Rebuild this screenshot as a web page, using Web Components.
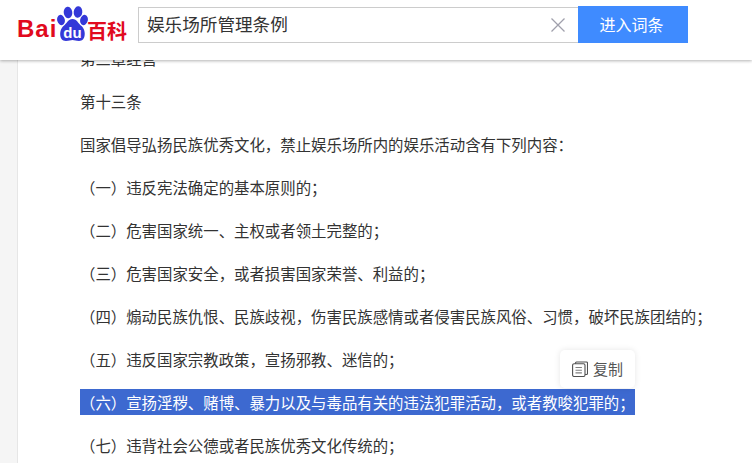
<!DOCTYPE html>
<html lang="zh">
<head>
<meta charset="utf-8">
<title>娱乐场所管理条例</title>
<style>
    html, body {
        margin: 0;
        height: 100%;
        overflow: hidden;
        background: #fff;
        font-family: "Noto Sans CJK SC", "Liberation Sans", sans-serif;
    }
</style>
</head>
<body>
<baike-page>
    <baike-header slot="header"></baike-header>
    <baike-article>
        <baike-para>第三章经营</baike-para>
        <baike-para>第十三条</baike-para>
        <baike-para>国家倡导弘扬民族优秀文化，禁止娱乐场所内的娱乐活动含有下列内容：</baike-para>
        <baike-para>（一）违反宪法确定的基本原则的；</baike-para>
        <baike-para>（二）危害国家统一、主权或者领土完整的；</baike-para>
        <baike-para>（三）危害国家安全，或者损害国家荣誉、利益的；</baike-para>
        <baike-para>（四）煽动民族仇恨、民族歧视，伤害民族感情或者侵害民族风俗、习惯，破坏民族团结的；</baike-para>
        <baike-para>（五）违反国家宗教政策，宣扬邪教、迷信的；</baike-para>
        <baike-para selected>（六）宣扬淫秽、赌博、暴力以及与毒品有关的违法犯罪活动，或者教唆犯罪的；<copy-tip></copy-tip></baike-para>
        <baike-para>（七）违背社会公德或者民族优秀文化传统的；</baike-para>
    </baike-article>
</baike-page>

<script>
class BaikePage extends HTMLElement {
    constructor() {
        super();
        this.attachShadow({ mode: "open" }).innerHTML = `
<style>
    :host { display: block; position: relative; height: 463px; overflow: hidden; background: #f5f5f5; }
    #sheet { margin-left: 17px; height: 100%; background: #fff; border-left: 1px solid #e6e6e6; }
</style>
<slot name="header"></slot>
<div id="sheet"><slot></slot></div>`;
    }
}

class BaikeHeader extends HTMLElement {
    constructor() {
        super();
        this.attachShadow({ mode: "open" }).innerHTML = `
<style>
    :host {
        display: flex;
        align-items: center;
        position: absolute;
        top: 0; left: 0; right: 0;
        height: 60px;
        box-sizing: border-box;
        padding: 0 0 11px 17px;
        background: #fff;
        box-shadow: 0 1px 3px rgba(0, 0, 0, .3);
        z-index: 2;
    }
    #logo { display: flex; align-items: flex-end; width: 121px; height: 37px; flex: none; color: #e10a1e; }
    #bai { font: bold 24px/22px "Liberation Sans", sans-serif; width: 39px; letter-spacing: 1px; margin-bottom: 3px; }
    #paw { width: 33px; height: 37px; flex: none; margin-bottom: 1px; }
    #ke { font: bold 20px/20px "Noto Sans CJK SC", sans-serif; margin-bottom: 2px; margin-left: -2px; white-space: nowrap; }
    #search {
        display: flex;
        align-items: center;
        box-sizing: border-box;
        width: 440px;
        height: 36px;
        padding: 0 11px 2px 8px;
        border: 1px solid #ccc;
        border-right: none;
        font-size: 17.6px;
        color: #333;
    }
    #search span { flex: 1; }
    #search svg { width: 16px; height: 16px; margin-right: 1px; margin-top: 2px; }
    #go {
        width: 110px;
        height: 37px;
        padding-right: 3px;
        box-sizing: border-box;
        background: #3f8bff;
        color: #fff;
        font-size: 16px;
        line-height: 36px;
        text-align: center;
    }
</style>
<div id="logo">
    <span id="bai">Bai</span>
    <svg id="paw" viewBox="0 0 33 37">
        <g fill="#3438d8">
            <ellipse cx="12" cy="7.500" rx="4.300" ry="5.700" transform="rotate(-8 12 7.500)"/>
            <ellipse cx="22" cy="7" rx="4.300" ry="5.700" transform="rotate(6 22 7)"/>
            <ellipse cx="5" cy="15" rx="3.800" ry="5.200" transform="rotate(-15 5 15)"/>
            <ellipse cx="28" cy="15" rx="3.800" ry="5.200" transform="rotate(15 28 15)"/>
            <path d="M16.500 14C12 14 11 18.500 7.500 21 3 24.500 2.500 36 10 36c3 0 4.500-1 6.500-1s3.500 1 6.500 1c7.500 0 7-11.500 2.500-15-3.500-2.500-4.500-7-9-7z"/>
        </g>
        <text x="16.500" y="32.500" text-anchor="middle" fill="#fff" font-family="Liberation Sans" font-weight="bold" font-size="15">du</text>
    </svg>
    <span id="ke">百科</span>
</div>
<div id="search">
    <span>娱乐场所管理条例</span>
    <svg viewBox="0 0 16 16" fill="none" stroke="#a0a0ac" stroke-width="1.300"><path d="M1.500 1.500l13 13M14.500 1.500l-13 13"/></svg>
</div>
<div id="go">进入词条</div>`;
    }
}

class BaikeArticle extends HTMLElement {
    constructor() {
        super();
        this.attachShadow({ mode: "open" }).innerHTML = `
<style>
    :host {
        display: flex;
        flex-direction: column;
        gap: 17px;
        padding: 45px 0 0 62px;
        font-size: 15.42px;
        line-height: 26px;
        color: #333;
    }
</style>
<slot></slot>`;
    }
}

class BaikePara extends HTMLElement {
    constructor() {
        super();
        this.attachShadow({ mode: "open" }).innerHTML = `
<style>
    :host { display: block; position: relative; white-space: nowrap; }
    :host([selected]) #text { display: inline-block; background: #3d69d0; color: #fff; }
</style>
<span id="text"><slot></slot></span>`;
    }
}

class CopyTip extends HTMLElement {
    constructor() {
        super();
        this.attachShadow({ mode: "open" }).innerHTML = `
<style>
    :host {
        display: flex;
        align-items: center;
        gap: 5px;
        position: absolute;
        left: 480px;
        top: -39px;
        width: 75px;
        height: 38px;
        box-sizing: border-box;
        padding-left: 12px;
        background: #fff;
        border-radius: 5px;
        box-shadow: 0 0 6px rgba(0, 0, 0, .1);
        color: #555;
        font-size: 15px;
        z-index: 1;
    }
    svg { width: 16px; height: 16px; flex: none; }
</style>
<svg viewBox="0 0 16 16" fill="none" stroke="#505050" stroke-width="1.100">
    <path d="M3.500 2.800V2Q3.500 1 4.500 1H14.500Q15.500 1 15.500 2V12.500Q15.500 13.500 14.500 13.500H13"/>
    <rect x=".6" y="2.800" width="12.400" height="12.700" rx="1.500"/>
    <path stroke="#808080" d="M3.500 6.500h6.400M3.500 9.200h6.400M3.500 11.900h6.400"/>
</svg>
<span>复制</span>`;
    }
}

customElements.define("baike-page", BaikePage);
customElements.define("baike-header", BaikeHeader);
customElements.define("baike-article", BaikeArticle);
customElements.define("baike-para", BaikePara);
customElements.define("copy-tip", CopyTip);
</script>
</body>
</html>
